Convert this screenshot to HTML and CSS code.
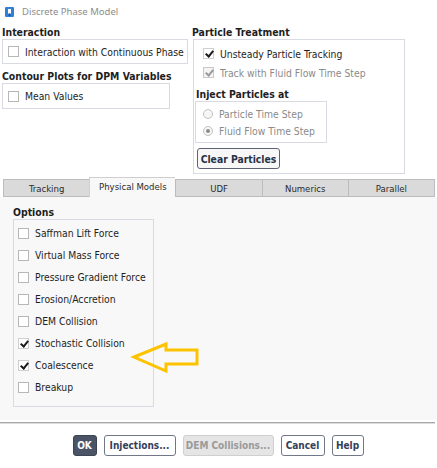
FILE: index.html
```html
<!DOCTYPE html>
<html>
<head>
<meta charset="utf-8">
<link rel="stylesheet" href="styles.css">
</head>
<body>
<div class="dialog">
  <div class="titlebar">
    <svg class="appicon" width="9" height="10" viewBox="0 0 9 10"><rect x="0" y="0" width="9" height="10" rx="1" fill="#2f7fd6"/><path d="M3 2 H6 V7 L4.5 5.8 L3 7 Z" fill="#ffffff"/><rect x="3.4" y="7.6" width="2.2" height="1" fill="#0d3f7a"/></svg>
    <span class="title">Discrete Phase Model</span>
  </div>

  <div class="top">
    <div class="leftcol">
      <div class="glabel">Interaction</div>
      <div class="group g-inter">
        <label class="row"><span class="cb"></span><span>Interaction with Continuous Phase</span></label>
      </div>
      <div class="glabel gl2">Contour Plots for DPM Variables</div>
      <div class="group g-contour">
        <label class="row"><span class="cb"></span><span>Mean Values</span></label>
      </div>
    </div>
    <div class="rightcol">
      <div class="glabel">Particle Treatment</div>
      <div class="group g-part">
        <label class="row prow"><span class="cb on"></span><span>Unsteady Particle Tracking</span></label>
        <label class="row prow dis"><span class="cb on dis"></span><span>Track with Fluid Flow Time Step</span></label>
        <div class="glabel sub">Inject Particles at</div>
        <div class="group g-inject">
          <label class="row rrow dis"><span class="rb"></span><span>Particle Time Step</span></label>
          <label class="row rrow dis"><span class="rb sel"></span><span>Fluid Flow Time Step</span></label>
        </div>
        <button class="btn clear">Clear Particles</button>
      </div>
    </div>
  </div>

  <div class="tabs">
    <div class="tab">Tracking</div>
    <div class="tab active">Physical Models</div>
    <div class="tab">UDF</div>
    <div class="tab">Numerics</div>
    <div class="tab">Parallel</div>
  </div>

  <div class="panel">
    <div class="glabel">Options</div>
    <div class="group g-opts">
      <label class="row orow"><span class="cb"></span><span>Saffman Lift Force</span></label>
      <label class="row orow"><span class="cb"></span><span>Virtual Mass Force</span></label>
      <label class="row orow"><span class="cb"></span><span>Pressure Gradient Force</span></label>
      <label class="row orow"><span class="cb"></span><span>Erosion/Accretion</span></label>
      <label class="row orow"><span class="cb"></span><span>DEM Collision</span></label>
      <label class="row orow"><span class="cb on"></span><span>Stochastic Collision</span></label>
      <label class="row orow"><span class="cb on"></span><span>Coalescence</span></label>
      <label class="row orow"><span class="cb"></span><span>Breakup</span></label>
    </div>
  </div>

  <div class="sep"></div>

  <div class="buttons">
    <button class="btn ok">OK</button>
    <button class="btn b-inj">Injections...</button>
    <button class="btn disabled b-dem">DEM Collisions...</button>
    <button class="btn b-cancel">Cancel</button>
    <button class="btn b-help">Help</button>
  </div>

  <svg class="arrow" width="80" height="44" viewBox="128 338 80 44">
    <polygon points="134,357 166,344 166,350 197,350 197,364 166,364 166,371" fill="none" stroke="#fdc300" stroke-width="3" stroke-linejoin="miter"/>
  </svg>
</div>
</body>
</html>
```

FILE: styles.css
```css
* { box-sizing: border-box; }
html, body { margin: 0; padding: 0; }
body {
  width: 437px;
  height: 468px;
  background: #ffffff;
  font-family: "DejaVu Sans Condensed", "DejaVu Sans", sans-serif;
  font-size: 10.3px;
  color: #1e1e1e;
  overflow: hidden;
}
.dialog { position: relative; width: 437px; height: 468px; }

.titlebar {
  height: 22px;
  display: flex;
  align-items: center;
  padding-left: 5px;
  padding-top: 1px;
}
.appicon { display: block; margin-right: 8px; }
.title {
  font-family: "Noto Sans", "Open Sans", sans-serif;
  font-size: 9.5px;
  color: #8c8c8c;
}

.top { display: flex; padding: 4px 0 0 2px; }
.leftcol { width: 186px; }
.rightcol { margin-left: 4px; }

.glabel {
  font-weight: bold;
  font-size: 10.4px;
  height: 13px;
  line-height: 13px;
  color: #1e1e1e;
  white-space: nowrap;
}
.gl2 { margin-top: 5px; height: 14px; line-height: 14px; }

.group {
  border: 1px solid #d8dbe2;
}
.g-inter { width: 186px; height: 25px; display: flex; align-items: center; padding-left: 5px; }
.g-contour { width: 168px; height: 26px; display: flex; align-items: center; padding-left: 5px; }

.row { display: flex; align-items: center; white-space: nowrap; }
.cb {
  width: 11px; height: 11px;
  border: 1px solid #b7b7b7;
  background: #fff;
  margin-right: 6px;
  position: relative;
  flex: none;
}
.cb.on::after {
  content: "";
  position: absolute;
  left: 3px; top: 0px;
  width: 3px; height: 6px;
  border-right: 2px solid #1a1a1a;
  border-bottom: 2px solid #1a1a1a;
  transform: rotate(40deg);
}
.cb.on.dis { background: #f4f4f4; border-color: #c9c9c9; }
.cb.on.dis::after { border-color: #9a9a9a; }
.dis { color: #8a8a8a; }

.g-part {
  margin-left: 1px;
  width: 212px;
  height: 135px;
  padding: 4px 0 0 1px;
}
.prow { height: 19px; padding-left: 8px; }
.cb.on { border-color: #cfcfcf; }
.sub { margin-top: 5px; margin-left: 1px; height: 14px; line-height: 14px; }
.g-inject {
  width: 132px;
  height: 42px;
  margin-top: 0px;
  padding-top: 3px;
}
.rrow { height: 17px; padding-left: 7px; }
.rb {
  width: 10px; height: 10px;
  border: 1px solid #c2c2c2;
  border-radius: 50%;
  background: #f6f6f6;
  margin-right: 6px;
  position: relative;
  flex: none;
}
.rb.sel::after {
  content: "";
  position: absolute;
  left: 2px; top: 2px;
  width: 4px; height: 4px;
  border-radius: 50%;
  background: #8c8c8c;
}

.btn {
  font-family: "DejaVu Sans Condensed", "DejaVu Sans", sans-serif;
  font-weight: bold;
  font-size: 10px;
  height: 21px;
  padding: 0;
  border: 1px solid #707888;
  border-radius: 3px;
  background: #ffffff;
  color: #34405a;
  display: flex;
  align-items: center;
  justify-content: center;
  white-space: nowrap;
}
.clear {
  margin-top: 5px;
  margin-left: 2px;
  width: 83px;
  font-size: 10.3px;
  border-color: #5d6373;
  background: #f7f7f7;
  color: #283247;
}

.tabs {
  display: flex;
  align-items: flex-end;
  height: 20px;
  margin-top: 3px;
  padding: 0 2px 0 3px;
}
.tab {
  flex: 1;
  height: 18px;
  background: #dadada;
  border: 1px solid #bcbcbc;
  border-right: none;
  font-family: "DejaVu Sans Condensed", "DejaVu Sans", sans-serif;
  font-size: 9.5px;
  color: #2a2a2a;
  display: flex;
  align-items: center;
  justify-content: center;
}
.tab:last-child { border-right: 1px solid #bcbcbc; }
.tab.active {
  height: 20px;
  background: #f8f8f8;
  border-color: #cfcfcf;
  border-bottom: none;
  padding-bottom: 2px;
}

.panel {
  height: 223px;
  background: #f8f8f8;
  padding: 9px 0 0 13px;
}
.g-opts {
  width: 141px;
  height: 188px;
  padding-top: 2px;
  background: #f8f8f8;
}
.orow { height: 22px; padding-left: 4px; }

.sep {
  margin: 2px 2px 0 0;
  height: 2px;
  border-top: 1px solid #a8a8a8;
  border-bottom: 1px solid #dcdcdc;
}

.buttons {
  display: flex;
  justify-content: center;
  gap: 7px;
  margin-top: 11px;
  padding-right: 1px;
}
.ok {
  width: 24px;
  background: #4b5466;
  border-color: #3c4454;
  color: #ffffff;
}
.b-inj { width: 72px; }
.b-dem { width: 91px; }
.b-cancel { width: 44px; }
.b-help { width: 32px; }
.disabled {
  background: #e5e5e5;
  border-color: #cfcfcf;
  color: #9a9a9a;
}

.arrow { position: absolute; left: 128px; top: 338px; }
```
